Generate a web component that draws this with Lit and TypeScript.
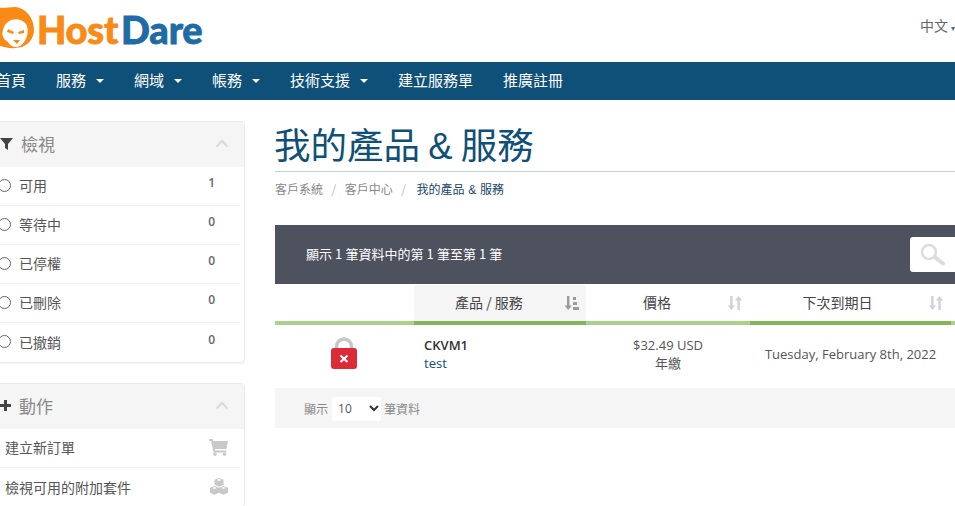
import { LitElement, html, css, svg } from "lit";
import { customElement } from "lit/decorators.js";

const caret = html`<span class="caret"></span>`;
const sortIcon = (active = false) => html`<svg class="sort" width="16" height="16" viewBox="0 0 16 16" fill="${active ? "#9a9a9a" : "#d2d2d2"}">
  ${active
    ? svg`<path d="M3 1h2.4v9.5H8L4.2 15 .6 10.5H3z"/><rect x="9" y="2" width="3" height="3"/><rect x="9" y="7" width="4" height="3"/><rect x="9" y="12" width="6" height="3"/>`
    : svg`<path d="M3.2 1h2.4v9.5h2.5L4.4 15 .8 10.5h2.4z"/><path d="M10.4 15h2.4V5.5h2.5L11.6 1 8 5.5h2.4z"/>`}
</svg>`;

const cube = (x: number, y: number) => svg`<g transform="translate(${x} ${y})">
  <path fill="#c8c8c8" d="M4.500 0 9 1.800v5L4.500 8.800 0 6.800v-5z"/>
  <path fill="#fff" d="M4.500 1 7 2 4.500 3 2 2z"/>
</g>`;

const filters = [
  ["可用", "1"],
  ["等待中", "0"],
  ["已停權", "0"],
  ["已刪除", "0"],
  ["已撤銷", "0"],
];

@customElement("app-root")
export class AppRoot extends LitElement {
  static styles = css`
    :host {
      display: block;
      width: 955px;
      height: 506px;
      overflow: hidden;
      background: #fff;
      font-family: "Noto Sans CJK TC", "Open Sans", sans-serif;
      color: #555;
    }
    .header {
      height: 62px;
      display: flex;
      justify-content: space-between;
      align-items: center;
    }
    .logo {
      display: flex;
      align-items: center;
      align-self: flex-start;
      margin-left: -5px;
      margin-top: 5px;
      height: 46px;
    }
    .logo-text {
      font-family: Lato, sans-serif;
      font-weight: 900;
      font-size: 38px;
      line-height: 46px;
      letter-spacing: -0.2px;
      margin-left: 3px;
      margin-top: 1px;
      -webkit-text-stroke: 0.8px currentColor;
    }
    .host {
      color: #f98a16;
    }
    .dare {
      color: #1f6ba5;
      margin-left: 3px;
    }
    .lang {
      font-size: 14px;
      color: #666;
      width: 35px;
      white-space: nowrap;
      margin-top: -12px;
    }
    .nav {
      height: 38px;
      padding-bottom: 3px;
      box-sizing: border-box;
      background: #0f5078;
      display: flex;
      align-items: center;
      gap: 30px;
      margin-left: -4px;
      color: #fff;
      font-size: 15px;
    }
    .nav span.item {
      display: flex;
      align-items: center;
      white-space: nowrap;
    }
    .caret {
      width: 0;
      height: 0;
      margin-left: 10px;
      margin-top: 2px;
      border-left: 4px solid transparent;
      border-right: 4px solid transparent;
      border-top: 4px solid #fff;
    }
    .page {
      display: flex;
    }
    .side {
      flex: none;
      width: 255px;
      margin-left: -10px;
      padding-top: 21px;
      display: flex;
      flex-direction: column;
      gap: 20px;
    }
    .card {
      border: 1px solid #eaeaea;
      border-radius: 4px;
      box-shadow: 0 1px 1px rgba(0, 0, 0, 0.05);
      background: #fff;
    }
    .card-head {
      height: 45px;
      box-sizing: border-box;
      padding: 0 0 3px 9px;
      background: #f5f5f5;
      display: flex;
      align-items: center;
      font-size: 17px;
      color: #888;
    }
    .card-head svg.lead {
      margin-right: 8px;
      flex: none;
    }
    .chev {
      margin-left: auto;
      margin-right: 15px;
    }
    .row {
      height: 39px;
      box-sizing: border-box;
      margin-right: 4px;
      padding: 0 0 2px 7px;
      border-bottom: 1px solid #f1f1f1;
      display: flex;
      align-items: center;
      font-size: 14px;
      color: #555;
    }
    .row:last-child {
      border-bottom: none;
    }
    .dot {
      width: 11px;
      height: 11px;
      border: 1px solid #666;
      border-radius: 50%;
      margin-right: 8px;
      flex: none;
    }
    .count {
      margin-left: auto;
      margin-right: 25px;
      font-size: 12px;
      color: #666;
      font-family: "Open Sans", sans-serif;
      font-weight: 600;
      margin-top: -5px;
    }
    .action {
      padding-left: 14px;
    }
    .action svg {
      margin-left: auto;
      margin-right: 12px;
    }
    .main {
      flex: none;
      width: 700px;
      margin-left: 30px;
    }
    h1 {
      margin: 0 0 0 -1px;
      padding-top: 20px;
      height: 51px;
      font-weight: 400;
      font-size: 36.5px;
      line-height: 48px;
      color: #0f5078;
      white-space: nowrap;
    }
    .amp {
      font-family: "Liberation Sans", sans-serif;
    }
    .rule {
      height: 1px;
      background: #c4ced6;
    }
    .crumbs {
      display: flex;
      height: 53px;
      padding-top: 9px;
      box-sizing: border-box;
      font-size: 12px;
      line-height: 16px;
      color: #888;
    }
    .crumbs i {
      font-style: normal;
      color: #bbb;
      margin: 0 8.5px;
    }
    .crumbs b {
      font-weight: 400;
      color: #17466a;
      margin-left: 2px;
      word-spacing: 1px;
    }
    .bar {
      height: 59px;
      padding: 0 0 1px 31px;
      box-sizing: border-box;
      background: #4e515e;
      display: flex;
      align-items: center;
      justify-content: space-between;
      color: #fff;
      font-size: 13px;
    }
    .bar > span {
      word-spacing: 0.2px;
      margin-top: -1px;
    }
    .search {
      width: 65px;
      height: 35px;
      background: #fff;
      border-radius: 3px 0 0 3px;
      display: flex;
      align-items: center;
      padding-left: 10px;
      box-sizing: border-box;
      margin-top: 1px;
    }
    .cols,
    .cells {
      display: grid;
      grid-template-columns: 139px 172px 164px 201px 24px;
    }
    .cols > div {
      height: 40px;
      box-sizing: border-box;
      margin-top: 1px;
      padding: 0 22px 3px 0;
      border-bottom: 4px solid #acd18a;
      display: flex;
      align-items: center;
      justify-content: center;
      position: relative;
      font-size: 14px;
      color: #444;
    }
    .cols > div.on {
      border-bottom-color: #82b657;
    }
    .cols > div.sorted {
      background: #f5f5f5;
    }
    .cols > div.due {
      padding-right: 26px;
    }
    .sort {
      position: absolute;
      right: 7px;
      top: 10px;
    }
    .sorted .sort {
      right: 6px;
    }
    .cells > div {
      height: 63px;
      box-sizing: border-box;
      padding-bottom: 5px;
      display: flex;
      flex-direction: column;
      justify-content: center;
      font-size: 13px;
      line-height: 18px;
      color: #555;
      font-family: "Open Sans", "Noto Sans CJK TC", sans-serif;
    }
    .cells > div.icon {
      align-items: center;
      padding: 0 2px 6px 0;
    }
    .product {
      padding-left: 10px;
    }
    .product strong {
      font-weight: 600;
      color: #333;
    }
    .product span {
      color: #0f5078;
    }
    .price,
    .date {
      align-items: center;
    }
    .foot {
      height: 40px;
      box-sizing: border-box;
      padding: 1px 0 0 29px;
      background: #f5f5f5;
      display: flex;
      align-items: center;
      font-size: 12px;
      color: #888;
    }
    .select {
      width: 49px;
      height: 24px;
      box-sizing: border-box;
      margin: 0 3px 0 4px;
      background: #fff;
      border-radius: 3px;
      display: flex;
      align-items: center;
      justify-content: space-between;
      padding: 0 2px 0 6px;
      color: #555;
      font-family: "Open Sans", sans-serif;
    }
  `;

  render() {
    return html`
      <div class="header">
        <div class="logo">
          <svg width="39" height="46" viewBox="0 0 39 46">
            <path fill="#f98a16" d="M3 2C8 4 12 2 20 2 31 3 39 13 39 25 39 33 34 39 27 42L20 43C16 44 10 42 5 41L0 40V8Z"/>
            <path fill="#fff" d="M13 17C17 13 27 13 31 19 34 24 33 32 29 37 27 40 25 41 22 42 18 42 15 41 13 37 9 35 6 30 8 25 9 21 10 19 13 17Z"/>
            <path fill="#f98a16" d="M13 24l6 3-1 2-6-2zM29 25l-6 2 1 2 5-1zM18 35h7l-3 4z"/>
          </svg>
          <span class="logo-text"><span class="host">Host</span><span class="dare">Dare</span></span>
        </div>
        <div class="lang">中文 <span style="font-size:8px">▾</span></div>
      </div>
      <div class="nav">
        <span class="item">首頁</span>
        <span class="item">服務${caret}</span>
        <span class="item">網域${caret}</span>
        <span class="item">帳務${caret}</span>
        <span class="item">技術支援${caret}</span>
        <span class="item">建立服務單</span>
        <span class="item">推廣註冊</span>
      </div>
      <div class="page">
        <div class="side">
          <div class="card">
            <div class="card-head">
              <svg class="lead" width="13" height="13" viewBox="0 0 13 13"><path fill="#444" d="M0 1h13L8 7v6L5 11V7z"/></svg>
              檢視
              <svg class="chev" width="14" height="9" viewBox="0 0 14 9"><path fill="none" stroke="#dcdcdc" stroke-width="2.4" d="M1.5 7.5 7 2l5.5 5.5"/></svg>
            </div>
            ${filters.map(
              ([label, n]) => html`<div class="row"><span class="dot"></span>${label}<span class="count">${n}</span></div>`
            )}
          </div>
          <div class="card">
            <div class="card-head">
              <svg class="lead" width="11" height="11" viewBox="0 0 11 11"><path fill="#444" d="M4 0h3v4h4v3H7v4H4V7H0V4h4z"/></svg>
              動作
              <svg class="chev" width="14" height="9" viewBox="0 0 14 9"><path fill="none" stroke="#dcdcdc" stroke-width="2.4" d="M1.5 7.5 7 2l5.5 5.5"/></svg>
            </div>
            <div class="row action">建立新訂單
              <svg width="19" height="17" viewBox="0 0 19 17"><path fill="#c8c8c8" d="M0 0h3.5l.6 2H19l-1.6 8H6l.3 1.6h11V13.500H4.500L2.200 2H0z"/><circle fill="#c8c8c8" cx="6" cy="15.300" r="1.700"/><circle fill="#c8c8c8" cx="15.500" cy="15.300" r="1.700"/></svg>
            </div>
            <div class="row action">檢視可用的附加套件
              <svg width="18" height="17" viewBox="0 0 18 17">${cube(4.5, 0)}${cube(0, 8)}${cube(9, 8)}</svg>
            </div>
          </div>
        </div>
        <div class="main">
          <h1>我的產品 <span class="amp">&amp;</span> 服務</h1>
          <div class="rule"></div>
          <div class="crumbs">
            <span>客戶系統</span><i>/</i><span>客戶中心</span><i>/</i><b>我的產品 <span class="amp">&amp;</span> 服務</b>
          </div>
          <div class="bar">
            <span>顯示 1 筆資料中的第 1 筆至第 1 筆</span>
            <div class="search">
              <svg width="25" height="23" viewBox="0 0 25 23"><circle cx="9" cy="9" r="7" fill="none" stroke="#dcdcdc" stroke-width="2.500"/><path d="M14.500 14 23 20.500" stroke="#dcdcdc" stroke-width="4" stroke-linecap="round"/></svg>
            </div>
          </div>
          <div class="cols">
            <div></div>
            <div class="on sorted">產品 / 服務${sortIcon(true)}</div>
            <div>價格${sortIcon()}</div>
            <div class="on due">下次到期日${sortIcon()}</div>
            <div></div>
          </div>
          <div class="cells">
            <div class="icon">
              <svg width="28" height="33" viewBox="0 0 28 33">
                <path d="M6.500 15V9.500a7.500 7.500 0 0 1 15 0V15" fill="none" stroke="#c6c6c6" stroke-width="3.500"/>
                <rect x="1" y="11" width="26" height="21" rx="3" fill="#dc2b36"/>
                <path d="M10.500 18.500 17.500 25M17.500 18.500 10.500 25" stroke="#fff" stroke-width="2.200"/>
              </svg>
            </div>
            <div class="product"><strong>CKVM1</strong><span>test</span></div>
            <div class="price"><span>$32.49 USD</span><span>年繳</span></div>
            <div class="date">Tuesday, February 8th, 2022</div>
            <div></div>
          </div>
          <div class="foot">
            顯示
            <div class="select">10 <svg width="10" height="7" viewBox="0 0 10 7"><path fill="none" stroke="#333" stroke-width="2" d="M1 1l4 4 4-4"/></svg></div>
            筆資料
          </div>
        </div>
      </div>
    `;
  }
}
